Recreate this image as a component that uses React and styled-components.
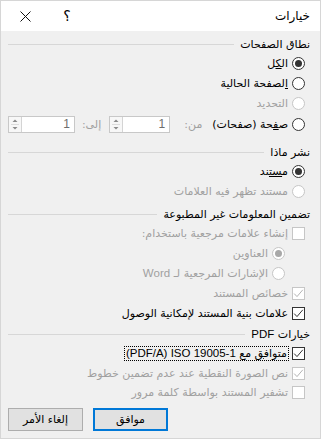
import React from "react";
import styled, { createGlobalStyle } from "styled-components";

const GlobalStyle = createGlobalStyle`
  html, body {
    margin: 0;
    padding: 0;
    background: #f0f0f0;
  }
  * {
    box-sizing: border-box;
  }
`;

const Dialog = styled.div`
  width: 321px;
  height: 439px;
  direction: rtl;
  display: flex;
  flex-direction: column;
  background: #f0f0f0;
  border: 1px solid #d6d6d6;
  font-family: "DejaVu Sans", sans-serif;
  font-size: 11px;
  color: #000;
`;

const TitleBar = styled.div`
  height: 30px;
  background: #fff;
  display: flex;
  align-items: center;
  padding: 0 10px 0 8px;
`;

const Title = styled.div`
  font-size: 12px;
  margin-left: auto;
`;

const HelpBtn = styled.div`
  width: 20px;
  text-align: center;
  font-size: 14px;
  margin-left: 16px;
`;

const CloseBtn = styled.div`
  width: 32px;
  height: 30px;
  display: flex;
  align-items: center;
  justify-content: center;
`;

const Body = styled.div`
  flex: 1;
  display: flex;
  flex-direction: column;
  padding: 4px 10px 0 7px;
`;

const Section = styled.div`
  display: flex;
  flex-direction: column;
  margin-top: ${(p) => p.$gap || 0}px;
`;

const SectionHeader = styled.div`
  height: 18px;
  display: flex;
  align-items: center;

  span {
    white-space: nowrap;
  }

  &::after {
    content: "";
    flex: 1;
    height: 0;
    border-top: 1px solid #d7d7d7;
    margin-right: 6px;
    margin-top: 1px;
  }
`;

const Row = styled.div`
  height: ${(p) => p.$h || 20}px;
  display: flex;
  align-items: center;
  padding-right: ${(p) => 5 + (p.$indent || 0)}px;
  color: ${(p) => (p.$disabled ? "#a0a0a0" : "#000")};
  white-space: nowrap;
`;

const Latin = styled.span`
  font-family: "Liberation Sans", sans-serif;
  font-size: 11.5px;
`;

const LtrRun = styled(Latin)`
  direction: ltr;
  unicode-bidi: isolate;
`;

const Radio = styled.span`
  width: 13px;
  height: 13px;
  flex: none;
  border-radius: 50%;
  border: 1px solid ${(p) => (p.$disabled ? "#c6c6c6" : "#333")};
  background: #fff;
  display: flex;
  align-items: center;
  justify-content: center;
  margin-left: 4px;

  &::after {
    content: "";
    width: 7px;
    height: 7px;
    border-radius: 50%;
    background: ${(p) => (p.$disabled ? "#a8a8a8" : "#333")};
    display: ${(p) => (p.$checked ? "block" : "none")};
  }
`;

const Box = styled.span`
  width: 13px;
  height: 13px;
  flex: none;
  border: 1px solid ${(p) => (p.$disabled ? "#c6c6c6" : "#333")};
  background: #fff;
  display: flex;
  align-items: center;
  justify-content: center;
  margin-left: 4px;
`;

const Key = styled.span`
  text-decoration: underline;
`;

const Focus = styled.span`
  outline: 1px dotted #000;
  outline-offset: 0;
  padding: 0 1px;
`;

const Label = styled.span`
  color: #a0a0a0;
  margin-right: ${(p) => p.$mr || 0}px;
  margin-left: ${(p) => p.$ml || 0}px;
`;

const Spin = styled.div`
  width: ${(p) => p.$w}px;
  height: 17px;
  display: flex;
  border: 1px solid #c8c8c8;
  background: #fff;
`;

const SpinValue = styled.div`
  flex: 1;
  direction: ltr;
  text-align: right;
  padding-right: 4px;
  line-height: 15px;
  color: #6d6d6d;
  font-family: "Liberation Sans", sans-serif;
  font-size: 12px;
`;

const SpinArrows = styled.div`
  width: 13px;
  display: flex;
  flex-direction: column;
  border-right: 1px solid #d4d4d4;
  background: #f7f7f7;
`;

const Footer = styled.div`
  display: flex;
  justify-content: flex-start;
  gap: 10px;
  padding: 0 0 7px 7px;
  direction: ltr;
`;

const Button = styled.button`
  width: 75px;
  height: 23px;
  font-family: "DejaVu Sans", sans-serif;
  font-size: 11px;
  color: #000;
  background: #e1e1e1;
  border: ${(p) => (p.$primary ? "2px solid #0078d7" : "1px solid #adadad")};
  padding: 0;
  direction: rtl;
`;

const Check = ({ disabled, checked }) => (
  <Box $disabled={disabled}>
    {checked && (
      <svg width="11" height="11" viewBox="0 0 11 11">
        <path
          d="M1.2 5.6 L4 8.6 L9.8 1.8"
          fill="none"
          stroke={disabled ? "#b4b4b4" : "#333"}
          strokeWidth="1"
        />
      </svg>
    )}
  </Box>
);

const Arrows = () => (
  <SpinArrows>
    <svg width="12" height="15" viewBox="0 0 12 15">
      <path d="M3.5 5 L6 2.5 L8.5 5 Z" fill="#8a8a8a" />
      <line x1="2" y1="7.5" x2="10" y2="7.5" stroke="#dcdcdc" />
      <path d="M3.5 10 L6 12.5 L8.5 10 Z" fill="#8a8a8a" />
    </svg>
  </SpinArrows>
);

const App = () => {
  return (
    <>
      <GlobalStyle />
      <Dialog>
        <TitleBar>
          <Title>خيارات</Title>
          <HelpBtn>؟</HelpBtn>
          <CloseBtn>
            <svg width="11" height="11" viewBox="0 0 11 11">
              <path d="M0.5 0.5 L10.5 10.5 M10.5 0.5 L0.5 10.5" stroke="#111" strokeWidth="1" />
            </svg>
          </CloseBtn>
        </TitleBar>
        <Body>
          <Section>
            <SectionHeader>
              <span>نطاق الصفحات</span>
            </SectionHeader>
            <Row>
              <Radio $checked />
              <span>ال<Key>ك</Key>ل</span>
            </Row>
            <Row>
              <Radio />
              <span><Key>ا</Key>لصفحة الحالية</span>
            </Row>
            <Row $disabled>
              <Radio $disabled />
              <span>التحديد</span>
            </Row>
            <Row $h={22}>
              <Radio />
              <span>ص<Key>ف</Key>حة (صفحات)</span>
              <Label $mr={10} $ml={14}>من:</Label>
              <Spin $w={63}>
                <SpinValue>1</SpinValue>
                <Arrows />
              </Spin>
              <Label $mr={8} $ml={7}>إلى:</Label>
              <Spin $w={69}>
                <SpinValue>1</SpinValue>
                <Arrows />
              </Spin>
            </Row>
          </Section>
          <Section $gap={8}>
            <SectionHeader>
              <span>نشر ماذا</span>
            </SectionHeader>
            <Row>
              <Radio $checked />
              <span>م<Key>ست</Key>ند</span>
            </Row>
            <Row $disabled>
              <Radio $disabled />
              <span>مستند تظهر فيه العلامات</span>
            </Row>
          </Section>
          <Section $gap={4}>
            <SectionHeader>
              <span>تضمين المعلومات غير المطبوعة</span>
            </SectionHeader>
            <Row $disabled>
              <Check disabled />
              <span>إنشاء علامات مرجعية باستخدام:</span>
            </Row>
            <Row $disabled $indent={20}>
              <Radio $disabled $checked />
              <span>العناوين</span>
            </Row>
            <Row $disabled $indent={20}>
              <Radio $disabled />
              <span>الإشارات المرجعية لـ <Latin>Word</Latin></span>
            </Row>
            <Row $disabled>
              <Check disabled checked />
              <span>خصائص المستند</span>
            </Row>
            <Row>
              <Check checked />
              <span>علامات بن<Key>ي</Key>ة المستند لإمكانية الوصول</span>
            </Row>
          </Section>
          <Section $gap={2}>
            <SectionHeader>
              <span>خيارات <Latin>PDF</Latin></span>
            </SectionHeader>
            <Row>
              <Check checked />
              <Focus>
                متواف<Key>ق</Key> مع <LtrRun>(PDF/A) ISO 19005-1</LtrRun>
              </Focus>
            </Row>
            <Row $disabled>
              <Check disabled checked />
              <span>نص الصورة النقطية عند عدم تضمين خطوط</span>
            </Row>
            <Row $disabled $h={19}>
              <Check disabled />
              <span>تشفير المستند بواسطة كلمة مرور</span>
            </Row>
          </Section>
        </Body>
        <Footer>
          <Button>إلغاء الأمر</Button>
          <Button $primary>موافق</Button>
        </Footer>
      </Dialog>
    </>
  );
};

export default App;
